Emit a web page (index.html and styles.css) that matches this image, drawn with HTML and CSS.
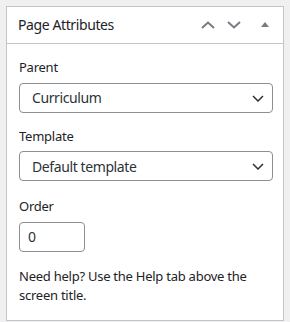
FILE: index.html
```html
<!DOCTYPE html>
<html lang="en">
<head>
  <meta charset="UTF-8" />
  <meta name="viewport" content="width=device-width, initial-scale=1.0" />
  <title>Page Attributes</title>
  <link rel="stylesheet" href="styles.css">
</head>
<body>
  <!-- ===== PAGE ATTRIBUTES BOX ===== -->
  <div class="postbox">
    <div class="postbox-header">
      <h2>Page Attributes</h2>
      <div class="handle-actions">
        <button class="handle handle-order" aria-label="Move up">
          <svg width="14" height="8" viewBox="0 0 14 8"><path d="M1 7 L7 1.5 L13 7" fill="none" stroke="#787c82" stroke-width="2"/></svg>
        </button>
        <button class="handle handle-order" aria-label="Move down">
          <svg width="14" height="8" viewBox="0 0 14 8"><path d="M1 1 L7 6.5 L13 1" fill="none" stroke="#787c82" stroke-width="2"/></svg>
        </button>
        <button class="handle handle-toggle" aria-label="Toggle panel">
          <svg width="8" height="5" viewBox="0 0 8 5"><path d="M0 5 L4 0 L8 5 Z" fill="#787c82"/></svg>
        </button>
      </div>
    </div>

    <div class="inside">
      <p class="field-label">Parent</p>
      <div class="select-wrap">
        <select><option>Curriculum</option></select>
        <svg class="select-arrow" width="12" height="7" viewBox="0 0 12 7"><path d="M1 1 L6 6 L11 1" fill="none" stroke="#2c3338" stroke-width="1.5"/></svg>
      </div>

      <p class="field-label">Template</p>
      <div class="select-wrap select-last">
        <select><option>Default template</option></select>
        <svg class="select-arrow" width="12" height="7" viewBox="0 0 12 7"><path d="M1 1 L6 6 L11 1" fill="none" stroke="#2c3338" stroke-width="1.5"/></svg>
      </div>

      <p class="field-label">Order</p>
      <input class="order-input" type="text" value="0">

      <p class="help">Need help? Use the Help tab above the screen title.</p>
    </div>
  </div>
</body>
</html>
```

FILE: styles.css
```css
:root {
  --bg: #f0f0f1;
  --text: #1d2327;
  --border: #c3c4c7;
  --field-border: #8c8f94;
}
* { box-sizing: border-box; margin: 0; padding: 0; }

body {
  font-family: "Noto Sans", "Open Sans", sans-serif;
  font-size: 13px;
  line-height: 1.5;
  letter-spacing: -0.25px;
  color: var(--text);
  background: var(--bg);
  padding: 6px;
}

/* ===== BOX ===== */
.postbox {
  width: 278px;
  background: #fff;
  border: 1px solid var(--border);
}
.postbox-header {
  height: 37px;
  display: flex;
  align-items: center;
  justify-content: space-between;
  border-bottom: 1px solid var(--border);
}
.postbox-header h2 {
  font-size: 14px;
  font-weight: 400;
  letter-spacing: -0.4px;
  padding-left: 11px;
  line-height: 1.4;
}
.handle-actions { display: flex; height: 100%; }
.handle {
  border: none;
  background: none;
  display: flex;
  align-items: center;
  justify-content: center;
  height: 100%;
}
.handle-order { width: 26px; }
.handle-toggle { width: 36px; padding-bottom: 2px; }

/* ===== FIELDS ===== */
.inside {
  padding: 14px 12px 14px;
  display: flex;
  flex-direction: column;
  align-items: flex-start;
}
.field-label { margin-bottom: 5px; }
.select-wrap {
  position: relative;
  width: 254px;
  margin-bottom: 14px;
}
.select-wrap.select-last { margin-bottom: 16px; }
.select-wrap select {
  appearance: none;
  -webkit-appearance: none;
  width: 100%;
  height: 30px;
  font: inherit;
  font-size: 14px;
  letter-spacing: -0.4px;
  color: #2c3338;
  background: #fff;
  border: 1px solid var(--field-border);
  border-radius: 4px;
  padding: 0 24px 0 12px;
}
.select-arrow {
  position: absolute;
  right: 9px;
  top: 12px;
  pointer-events: none;
}
.order-input {
  width: 66px;
  height: 30px;
  font: inherit;
  font-size: 14px;
  color: #2c3338;
  border: 1px solid var(--field-border);
  border-radius: 4px;
  padding: 0 8px;
  margin-bottom: 15px;
}
.help { width: 250px; }
```
